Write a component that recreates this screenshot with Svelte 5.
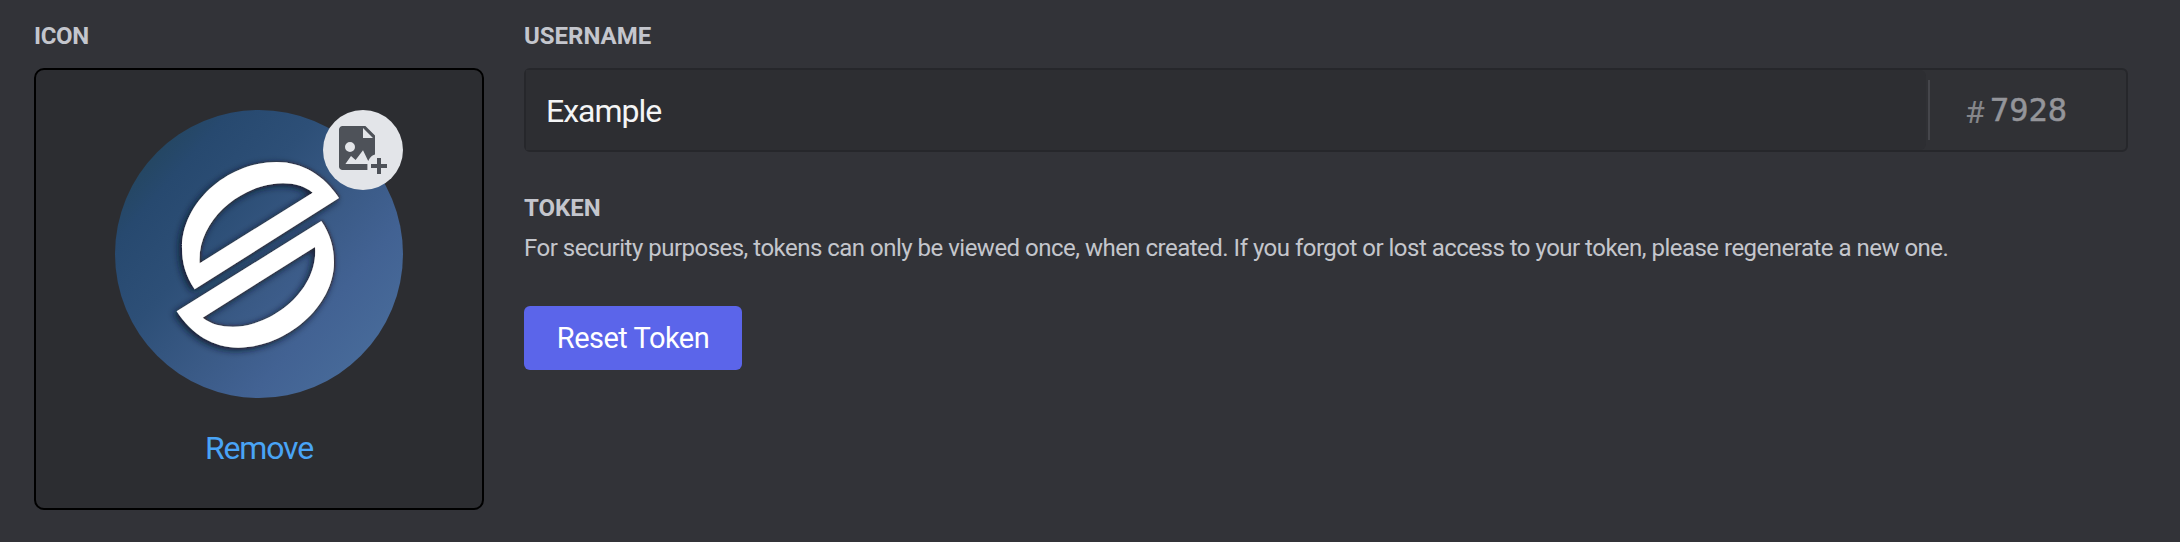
<script>
  const username = 'Example';
  const discriminator = '7928';
</script>

<main class="settings">
  <section class="icon-column">
    <h2 class="label icon-label">Icon</h2>
    <div class="icon-card">
      <div class="avatar">
        <svg class="picture" viewBox="45 30 864 864" aria-hidden="true">
          <defs>
            <linearGradient id="sky" x1="0.1" y1="0.16" x2="0.88" y2="0.84">
              <stop offset="0" stop-color="#244660" />
              <stop offset="0.12" stop-color="#27496f" />
              <stop offset="0.35" stop-color="#2d4f77" />
              <stop offset="0.6" stop-color="#3a5a86" />
              <stop offset="0.8" stop-color="#426293" />
              <stop offset="1" stop-color="#476a99" />
            </linearGradient>
            <filter id="shade" x="-20%" y="-20%" width="140%" height="140%">
              <feDropShadow dx="-8" dy="7" stdDeviation="11" flood-color="#07142c" flood-opacity="0.9" />
            </filter>
            <filter id="rim" x="-20%" y="-20%" width="140%" height="140%">
              <feDropShadow dx="3" dy="-1" stdDeviation="3" flood-color="#3a2c28" flood-opacity="0.9" />
            </filter>
          </defs>
          <circle cx="477" cy="462" r="432" fill="url(#sky)" />
          <g filter="url(#shade)">
            <g fill="#fff" fill-rule="evenodd" filter="url(#rim)">
              <path d="M284 568C257 528 246 489 246 444C246 306 384 186 530 186C608 186 672 226 717 294ZM299 490L638 278C614 259 584 250 549 250C428 250 291 357 299 490Z" />
              <path d="M664 363C690 401 702 442 702 487C702 620 558 743 415 743C339 743 276 704 230 634ZM645 441L308 653C333 672 363 680 399 680C515 680 656 571 645 441Z" />
            </g>
          </g>
        </svg>
        <div class="badge">
          <svg class="add-image" viewBox="0 0 24 24" aria-hidden="true">
            <path fill="#4e5259" fill-rule="evenodd" d="M1.8 0H13.2L18 4.8V14.3C16.6 14.7 15.5 15.6 14.6 17.5L12 12.1L8.3 17L6 15L3.2 19H14.2V22H1.8C.8 22 0 21.2 0 20.2V1.8C0 .8 .8 0 1.8 0ZM12 1V6H17ZM5.5 8A2.5 2.5 0 1 0 5.5 13A2.5 2.5 0 1 0 5.5 8Z" />
            <path fill="#4e5259" d="M19 16H21V19H24V21H21V24H19V21H16V19H19Z" />
          </svg>
        </div>
      </div>
      <span class="remove">Remove</span>
    </div>
  </section>

  <section class="details">
    <h2 class="label username-label">Username</h2>
    <div class="username-field">
      <div class="name">{username}</div>
      <div class="tag">
        <span class="hash">#</span><span class="digits">{discriminator}</span>
      </div>
    </div>
    <h2 class="label token-label">Token</h2>
    <p class="note">For security purposes, tokens can only be viewed once, when created. If you forgot or lost access to your token, please regenerate a new one.</p>
    <button class="reset" type="button">Reset Token</button>
  </section>
</main>

<style>
  :global(body) {
    margin: 0;
    background: #323338;
  }

  .settings {
    box-sizing: border-box;
    width: 2180px;
    height: 542px;
    padding: 20px 52px 0 34px;
    display: flex;
    gap: 40px;
    overflow: hidden;
    background: #323338;
    font-family: Roboto, 'Noto Sans', sans-serif;
    font-size: 32px;
  }

  .icon-column {
    width: 450px;
    flex: none;
  }

  .details {
    flex: 1;
    display: flex;
    flex-direction: column;
    align-items: flex-start;
  }

  .label {
    margin: 0;
    height: 32px;
    line-height: 32px;
    font-size: 24px;
    font-weight: 700;
    text-transform: uppercase;
    white-space: nowrap;
    color: #c4c6cd;
  }

  .icon-label {
    letter-spacing: -0.3px;
  }

  .icon-card {
    box-sizing: border-box;
    height: 442px;
    margin-top: 16px;
    padding-top: 40px;
    display: flex;
    flex-direction: column;
    align-items: center;
    border: 2px solid #000;
    border-radius: 10px;
    background: #2c2d31;
  }

  .avatar {
    position: relative;
    width: 288px;
    height: 288px;
  }

  .picture {
    display: block;
    width: 288px;
    height: 288px;
  }

  .badge {
    position: absolute;
    top: 0;
    right: 0;
    width: 80px;
    height: 80px;
    border-radius: 50%;
    display: grid;
    place-items: center;
    background: #e3e5e9;
  }

  .add-image {
    width: 48px;
    height: 48px;
  }

  .remove {
    margin-top: 30px;
    line-height: 40px;
    letter-spacing: -1.2px;
    color: #49a4f6;
  }

  .username-field {
    box-sizing: border-box;
    align-self: stretch;
    height: 84px;
    margin-top: 16px;
    display: flex;
    border: 2px solid #26272b;
    border-radius: 6px;
    background: #303135;
  }

  .name {
    flex: 1;
    padding-left: 20px;
    line-height: 82px;
    letter-spacing: -1px;
    border-radius: 0 6px 6px 0;
    color: #f4f5f6;
    background: #2d2e32;
  }

  .tag {
    width: 200px;
    display: flex;
    align-items: center;
    color: #94959a;
  }

  .tag::before {
    content: '';
    width: 2px;
    height: 60px;
    margin: 0 35px 0 2px;
    background: #45464b;
  }

  .hash {
    width: 25px;
    padding-top: 3px;
    color: #85868a;
  }

  .digits {
    font-family: 'DejaVu Sans Mono', monospace;
    -webkit-text-stroke: 0.5px #94959a;
  }

  .token-label {
    margin-top: 40px;
  }

  .note {
    margin: 8px 0 0;
    height: 32px;
    line-height: 32px;
    font-size: 24px;
    letter-spacing: -0.51px;
    white-space: nowrap;
    color: #c4c6cc;
  }

  .reset {
    width: 218px;
    height: 64px;
    margin-top: 42px;
    padding: 0;
    border: 0;
    border-radius: 6px;
    font-family: inherit;
    font-size: 29px;
    letter-spacing: -0.5px;
    color: #fff;
    background: #5b65ea;
  }
</style>
